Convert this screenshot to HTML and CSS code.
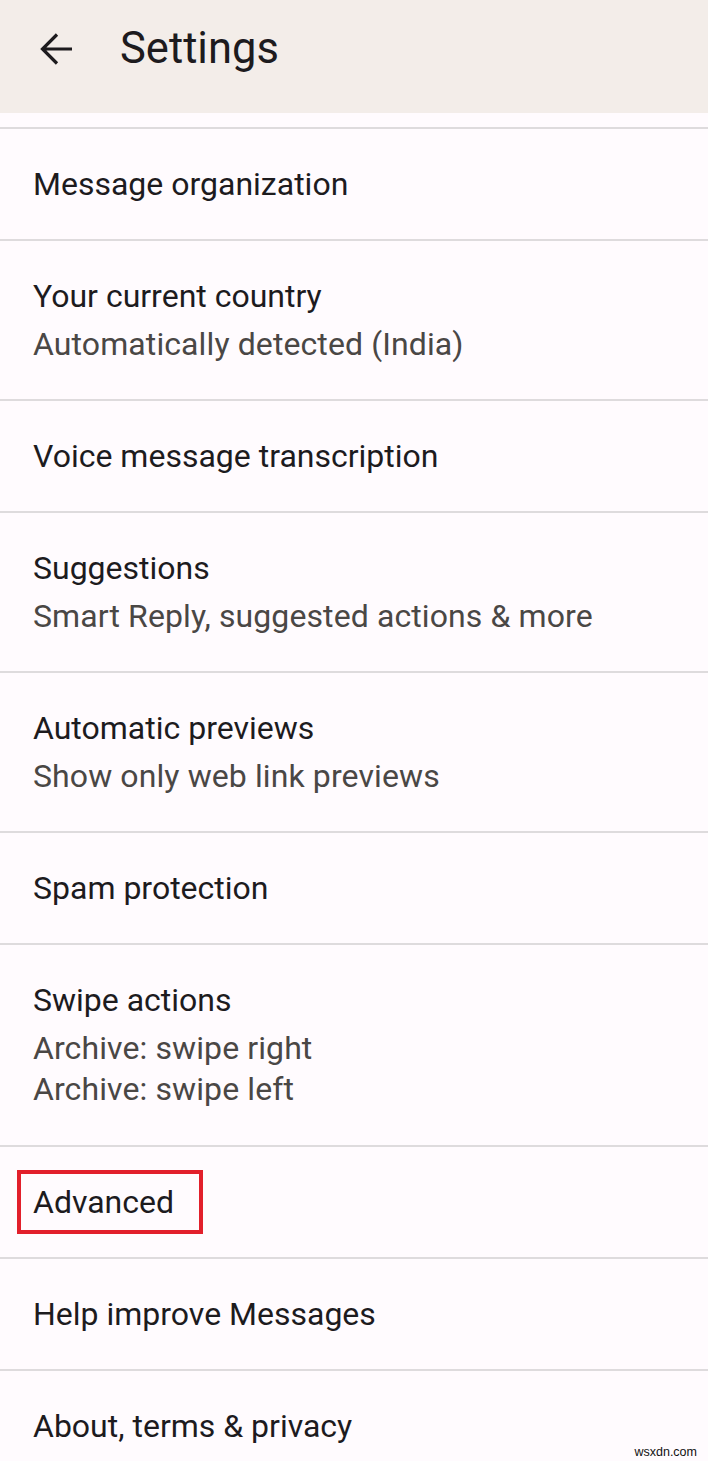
FILE: index.html
```html
<!DOCTYPE html>
<html lang="en">
<head>
<meta charset="utf-8">
<title>Settings</title>
<link rel="stylesheet" href="styles.css">
</head>
<body>
<header class="appbar">
  <svg class="back" width="36" height="36" viewBox="0 0 36 36" aria-hidden="true">
    <path d="M34 18H5M19 3.5L4.5 18L19 32.5" fill="none" stroke="#1d1b1e" stroke-width="3.2" stroke-linecap="butt" stroke-linejoin="miter"/>
  </svg>
  <h1 class="title">Settings</h1>
</header>
<main class="list">
  <div class="item"><div class="item-title">Message organization</div></div>
  <div class="item"><div class="item-title">Your current country</div><div class="item-sub">Automatically detected (India)</div></div>
  <div class="item"><div class="item-title">Voice message transcription</div></div>
  <div class="item"><div class="item-title">Suggestions</div><div class="item-sub">Smart Reply, suggested actions &amp; more</div></div>
  <div class="item"><div class="item-title">Automatic previews</div><div class="item-sub">Show only web link previews</div></div>
  <div class="item"><div class="item-title">Spam protection</div></div>
  <div class="item"><div class="item-title">Swipe actions</div><div class="item-sub item-sub-multi">Archive: swipe right<br>Archive: swipe left</div></div>
  <div class="item"><div class="item-title"><span class="highlight">Advanced</span></div></div>
  <div class="item"><div class="item-title">Help improve Messages</div></div>
  <div class="item"><div class="item-title">About, terms &amp; privacy</div></div>
</main>
<div class="watermark">wsxdn.com</div>
</body>
</html>
```
FILE: styles.css
```css
html, body {
  margin: 0;
  padding: 0;
  height: 1461px;
  overflow: hidden;
}
body {
  background: #fffbfe;
  font-family: Roboto, "Noto Sans", sans-serif;
  color: #1d1b1e;
  position: relative;
}
.appbar {
  height: 113px;
  box-sizing: border-box;
  padding: 0 0 16px 38px;
  background: #f3ede9;
  display: flex;
  align-items: center;
}
.back {
  display: block;
  flex: none;
}
.title {
  margin: 0 0 0 46px;
  font-size: 43.5px;
  font-weight: 400;
  line-height: 50px;
  color: #1d1b1e;
}
.list {
  padding-top: 14px;
}
.item {
  border-top: 2px solid #dedbdd;
  padding: 35px 33px;
}
.item-title {
  font-size: 32px;
  line-height: 40px;
  color: #1d1b1e;
}
.item-sub {
  margin-top: 8px;
  font-size: 32px;
  line-height: 40px;
  letter-spacing: 0.1px;
  color: #4a4745;
}
.item-sub-multi {
  line-height: 41px;
}
.highlight {
  position: relative;
  display: inline-block;
}
.highlight::after {
  content: "";
  position: absolute;
  left: -16px;
  top: -12px;
  width: 186px;
  height: 64px;
  box-sizing: border-box;
  border: 4px solid #e21f2b;
}
.watermark {
  position: absolute;
  right: 11px;
  bottom: 2px;
  font-family: "Liberation Sans", Arial, sans-serif;
  font-size: 12.5px;
  line-height: 14px;
  color: #111;
}
```
